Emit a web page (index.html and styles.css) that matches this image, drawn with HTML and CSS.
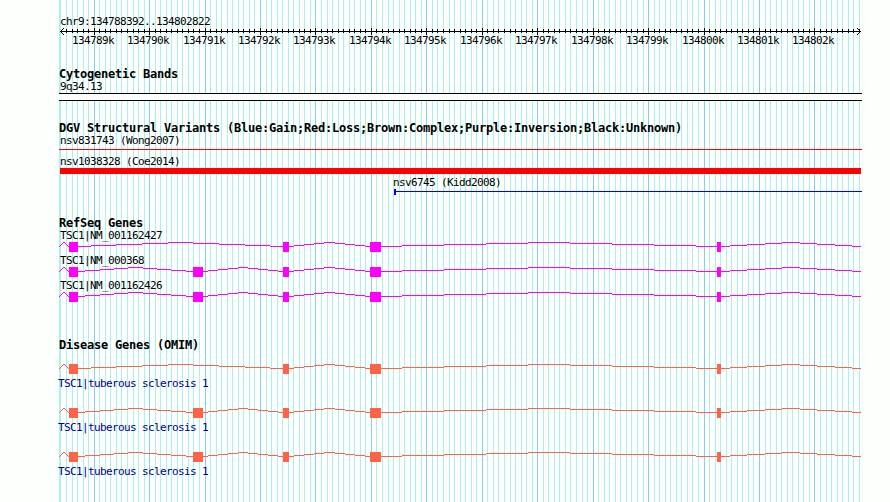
FILE: index.html
```
<!DOCTYPE html>
<html lang="en">
<head>
  <meta charset="UTF-8">
  <title>chr9:134788392..134802822</title>
  <link rel="stylesheet" href="styles.css">
</head>
<body>

<div class="browser">
  <svg class="grid" id="grid" viewBox="59 0 803 502"></svg>

  <div class="tracks">
    <div class="ruler">
      <div class="label">chr9:134788392..134802822</div>
      <svg class="axis" id="axis" viewBox="59 0 803 20">
        <path class="axis-line" d="M60 3.5H861M64 0L60.5 3.5L64 7M857 0L860.5 3.5L857 7"/>
      </svg>
    </div>

    <div class="track cyto">
      <h2>Cytogenetic Bands</h2>
      <div class="label">9q34.13</div>
      <div class="band"></div>
    </div>

    <div class="track variants">
      <h2>DGV Structural Variants (Blue:Gain;Red:Loss;Brown:Complex;Purple:Inversion;Black:Unknown)</h2>
      <div class="label">nsv831743 (Wong2007)</div>
      <div class="loss-thin"></div>
      <div class="label">nsv1038328 (Coe2014)</div>
      <div class="loss"></div>
      <div class="label gain-label">nsv6745 (Kidd2008)</div>
      <svg class="gain" viewBox="59 0 803 6">
        <rect x="394" y="0" width="2" height="6"/>
        <rect x="394" y="2" width="468" height="1"/>
      </svg>
    </div>

    <div class="track refseq">
      <h2>RefSeq Genes</h2>
      <div class="label">TSC1|NM_001162427</div>
      <svg class="gene short" viewBox="59 0 803 10"></svg>
      <div class="label">TSC1|NM_000368</div>
      <svg class="gene" viewBox="59 0 803 10"></svg>
      <div class="label">TSC1|NM_001162426</div>
      <svg class="gene" viewBox="59 0 803 10"></svg>
    </div>

    <div class="track omim">
      <h2>Disease Genes (OMIM)</h2>
      <svg class="gene short" viewBox="59 0 803 10"></svg>
      <div class="label">TSC1|tuberous sclerosis 1</div>
      <svg class="gene" viewBox="59 0 803 10"></svg>
      <div class="label">TSC1|tuberous sclerosis 1</div>
      <svg class="gene" viewBox="59 0 803 10"></svg>
      <div class="label">TSC1|tuberous sclerosis 1</div>
    </div>
  </div>
</div>

<script>
  const start = 134788392;
  const end = 134802822;
  const grid = document.getElementById('grid');
  const axis = document.getElementById('axis');

  function add(parent, tag, attrs, text) {
    const el = document.createElementNS('http://www.w3.org/2000/svg', tag);
    for (const key in attrs) el.setAttribute(key, attrs[key]);
    if (text) el.textContent = text;
    parent.appendChild(el);
  }

  add(grid, 'rect', { class: 'minor', x: 59, y: 0, width: 1, height: 502 });

  // one line every 100 bp, a labelled one every 1000 bp
  for (let pos = 134788400; pos < end; pos += 100) {
    const x = 60 + Math.round((pos - start) * 800 / (end - start));
    const major = pos % 1000 === 0;
    add(grid, 'rect', { class: major ? 'major' : 'minor', x: x, y: 0, width: 1, height: 502 });
    if (x > 61) {
      add(axis, 'rect', { x: x, y: major ? 0 : 1, width: 1, height: major ? 7 : 4 });
    }
    if (major) {
      add(axis, 'text', { x: x - 22, y: 16 }, pos / 1000 + 'k');
    }
  }

  // intron: a hat between two exons, drawn as flat one pixel steps
  function intron(svg, from, to) {
    const mid = (from + to) / 2;
    const step = (to - from) / 8;
    for (let i = -4; i <= 4; i++) {
      const x1 = Math.max(from, Math.round(mid + (i - 0.5) * step));
      const x2 = Math.min(to, Math.round(mid + (i + 0.5) * step));
      add(svg, 'rect', { x: x1, y: Math.abs(i), width: x2 - x1, height: 1 });
    }
  }

  document.querySelectorAll('.gene').forEach(function (svg) {
    const exons = [[69, 9], [193, 10], [283, 6], [370, 11], [717, 4]];
    if (svg.classList.contains('short')) exons.splice(1, 1);

    let from = 59;
    exons.forEach(function (exon) {
      intron(svg, from, exon[0]);
      add(svg, 'rect', { x: exon[0], y: 0, width: exon[1], height: 10 });
      from = exon[0] + exon[1];
    });
    intron(svg, from, 861);
  });
</script>

</body>
</html>
```
FILE: styles.css
```
* {
  box-sizing: border-box;
}

body {
  margin: 0;
  background: #fdfffc;
  color: #000;
  font-family: "DejaVu Sans Mono", monospace;
  overflow: hidden;
}

svg {
  display: block;
  shape-rendering: crispEdges;
}

.browser {
  position: relative;
  width: 890px;
  height: 502px;
  padding: 15px 28px 0 59px;
}

.grid {
  position: absolute;
  top: 0;
  left: 59px;
  width: 803px;
  height: 502px;
}

.minor {
  fill: #afeeee;
}

.major {
  fill: #87ceeb;
}

.tracks {
  position: relative;
}

h2 {
  margin: 0;
  height: 13px;
  font-size: 12px;
  line-height: 14px;
  font-weight: bold;
  letter-spacing: -0.224px;
  white-space: nowrap;
}

.label,
.axis text {
  font-size: 11px;
  line-height: 13px;
  letter-spacing: -0.622px;
  white-space: nowrap;
}

.label {
  height: 13px;
  padding-left: 1px;
}

.axis {
  width: 803px;
  height: 20px;
}

.axis-line {
  fill: none;
  stroke: #000;
}

/* Cytogenetic bands */
.cyto {
  margin-top: 19px;
}

.band {
  height: 8px;
  background: #fdfffc;
  border-top: 1px solid #000;
  border-bottom: 1px solid #000;
}

/* Structural variants */
.variants {
  margin-top: 20px;
}

.loss-thin {
  height: 1px;
  margin: 2px 0 5px;
  background: #f00;
}

.loss {
  height: 6px;
  margin: 0 1px 2px;
  background: #f00;
}

.gain-label {
  padding-left: 334px;
}

.gain {
  width: 803px;
  height: 6px;
  fill: #00f;
}

/* Genes */
.gene {
  width: 803px;
  height: 10px;
  fill: currentColor;
}

.gene + .label {
  margin-top: 2px;
}

.refseq {
  margin-top: 21px;
}

.refseq .gene {
  color: #f0f;
}

.omim {
  margin-top: 36px;
}

.omim .gene {
  margin-top: 13px;
  color: #ff6347;
}

.omim .label {
  margin-top: 3px;
  margin-left: -1px;
  padding-left: 0;
  color: #00008b;
}

.omim .label + .gene {
  margin-top: 18px;
}
```
